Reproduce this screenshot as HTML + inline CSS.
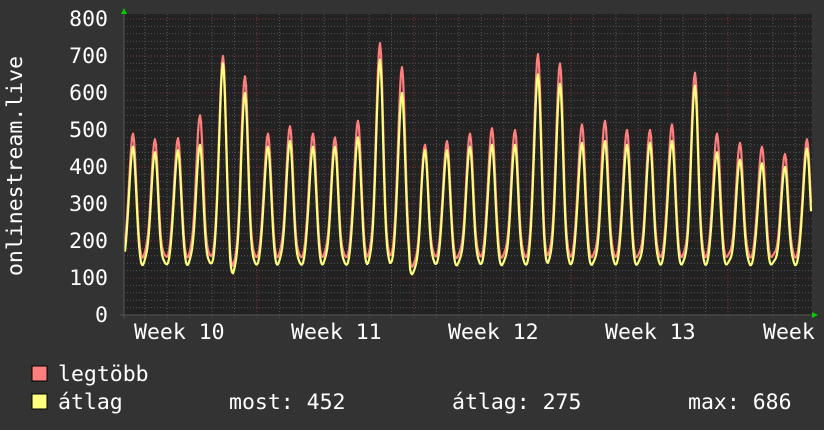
<!DOCTYPE html>
<html><head><meta charset="utf-8"><style>
body{margin:0;background:#333;width:824px;height:430px;overflow:hidden;font-family:"DejaVu Sans Mono","Liberation Mono",monospace;color:#fff}
svg{position:absolute;left:0;top:0}
text{font-family:"DejaVu Sans Mono","Liberation Mono",monospace;fill:#fff}
</style></head><body>
<svg id="g" width="824" height="430" xmlns="http://www.w3.org/2000/svg">
<rect x="0" y="0" width="824" height="430" fill="#333"/>
<rect x="124" y="14" width="688" height="301" fill="#222"/>
<g id="grid"></g>
<polyline id="mx" fill="none" stroke="#ff7f7f" stroke-width="2.2" stroke-linejoin="round"/>
<polyline id="av" fill="none" stroke="#ffff7f" stroke-width="2.2" stroke-linejoin="round"/>
<line x1="124" y1="12" x2="124" y2="318" stroke="#555" stroke-width="1"/>
<line x1="120" y1="315" x2="814" y2="315" stroke="#555" stroke-width="1"/>
<polygon points="121,14 127,14 124,8" fill="#0c0"/>
<polygon points="812,312 812,318 818,315" fill="#0c0"/>
<g font-size="21.5" text-anchor="end">
<text x="108" y="26">800</text><text x="108" y="63">700</text><text x="108" y="100">600</text>
<text x="108" y="137">500</text><text x="108" y="174">400</text><text x="108" y="211">300</text>
<text x="108" y="248">200</text><text x="108" y="285">100</text><text x="108" y="322">0</text>
</g>
<g font-size="21.5">
<text x="134" y="339">Week 10</text><text x="291" y="339">Week 11</text><text x="448" y="339">Week 12</text>
<text x="605" y="339">Week 13</text><text x="763" y="339">Week</text>
</g>
<text font-size="21.5" transform="translate(22,166) rotate(-90)" text-anchor="middle">onlinestream.live</text>
<rect x="32" y="366" width="15" height="15" fill="#ff7f7f" stroke="#000"/>
<rect x="32" y="394" width="15" height="15" fill="#ffff7f" stroke="#000"/>
<g font-size="21.5">
<text x="58" y="381">legtöbb</text>
<text x="58" y="409">átlag</text>
<text x="229" y="409">most: 452</text>
<text x="452" y="409">átlag: 275</text>
<text x="688" y="409">max: 686</text>
</g>
</svg>
<script>
var g=document.getElementById('grid'),s='';
for(var v=20;v<=800;v+=20){var y=315-v*0.37;var maj=v%100==0;
s+='<line x1="124" x2="812" y1="'+y+'" y2="'+y+'" stroke="'+(maj?'#7a3a3a':'#555')+'" stroke-dasharray="1,2"/>';}
for(var k=-30;k<10;k++){var x=728+22.43*k;if(x<126||x>812)continue;var maj=Math.abs(k%7)==0;
s+='<line y1="14" y2="318" x1="'+x+'" x2="'+x+'" stroke="'+(maj?'#7a3a3a':'#555')+'" stroke-dasharray="1,2"/>';}
g.innerHTML=s;
var px=[133,155,178,200,223,245,268,290,313,335,358,380,402,425,447,470,492,515,538,560,582,605,627,650,672,695,717,740,762,785,807];
var pm=[490,475,478,540,700,645,490,510,490,480,525,735,670,460,470,490,505,500,705,680,515,525,500,500,515,655,490,465,455,435,475];
var pa=[455,440,445,460,680,600,455,470,455,455,480,690,600,445,445,455,460,460,650,625,465,470,460,465,470,620,440,420,410,400,450];
function val(x,p,tr){var best=tr;for(var i=0;i<px.length;i++){var d=(x-px[i]);var w=d<0?5.5:4.5;var sh=Math.exp(-Math.pow(Math.abs(d)/w,2));var t=tr+(p[i]-tr)*sh;if(t>best)best=t;}return best;}
function tr1(x,b){var t=b;if(Math.abs(x-235)<6||Math.abs(x-415)<6)t-=25;return t+6*Math.sin(x*0.7);}
var a='',b='';
for(var x=125;x<=811;x++){var m=val(x,pm,tr1(x,155));var v=val(x,pa,tr1(x,135));
a+=x+','+(315-m*0.37).toFixed(1)+' ';b+=x+','+(315-v*0.37).toFixed(1)+' ';}
document.getElementById('mx').setAttribute('points',a);
document.getElementById('av').setAttribute('points',b);
</script>
</body></html>
